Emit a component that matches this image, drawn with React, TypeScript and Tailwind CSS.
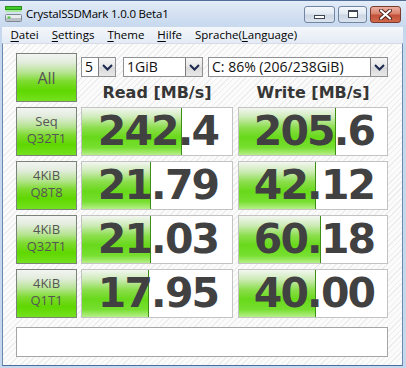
import React from "react";

const rows = [
  { a: "Seq", b: "Q32T1", read: "242.4", readFill: 100, write: "205.6", writeFill: 97 },
  { a: "4KiB", b: "Q8T8", read: "21.79", readFill: 69, write: "42.12", writeFill: 77 },
  { a: "4KiB", b: "Q32T1", read: "21.03", readFill: 69, write: "60.18", writeFill: 82 },
  { a: "4KiB", b: "Q1T1", read: "17.95", readFill: 67, write: "40.00", writeFill: 77 },
];

const greenBtn =
  "border border-[#7a8378] bg-[linear-gradient(to_bottom,#f3f4f3_0%,#e2ecdc_18%,#b4e48e_40%,#7ddb2e_58%,#5fd700_78%,#74e11f_100%)]";

function Chevron() {
  return (
    <svg width="11" height="7" viewBox="0 0 11 7">
      <path d="M1 1 L5.5 5.5 L10 1" fill="none" stroke="#1b2850" strokeWidth="2" />
    </svg>
  );
}

function Combo({ w, text }: { w: string; text: string }) {
  return (
    <div className={`flex h-[20px] border border-[#8f9194] bg-white ${w}`}>
      <div className="flex-1 pl-[3px] text-[14px] leading-[18px] text-[#111]">{text}</div>
      <div className="flex w-[17px] items-center justify-center border-l border-[#7d7d7d] bg-[linear-gradient(to_bottom,#f6f6f6,#e6e6e6_50%,#d8d8d8_51%,#e8e8e8)]">
        <Chevron />
      </div>
    </div>
  );
}

function Meter({ value, fill, w }: { value: string; fill: number; w: string }) {
  return (
    <div className={`relative h-[49px] border border-[#c3c3c3] bg-white ${w}`}>
      {/* bar behind the number */}
      <div
        className="absolute bottom-0 left-0 top-0 border-r border-[#3c8f14] bg-[linear-gradient(to_bottom,#f3f6f1_0%,#cdebb6_20%,#8bde4c_42%,#68d91a_62%,#77df30_84%,#b6ef88_100%)]"
        style={{ width: fill }}
      />
      <div className="relative flex h-full items-center justify-center pl-[2px] font-['DejaVu_Sans',sans-serif] text-[41px] font-bold leading-none tracking-[-1.8px] text-[#414141]">
        {value}
      </div>
    </div>
  );
}

function MenuItem({ first, rest }: { first: string; rest: string }) {
  return (
    <span className="px-[6.5px]">
      <span className="underline underline-offset-[2px]">{first}</span>
      {rest}
    </span>
  );
}

export default function App() {
  return (
    <div className="flex h-[368px] w-[406px] flex-col overflow-hidden bg-[#c6d8ee] font-['Open_Sans',sans-serif]">
      {/* Title bar */}
      <div className="flex h-[27px] items-center border-t border-[#4f6f9a] bg-[linear-gradient(to_bottom,#e4edf8,#d3e1f2_50%,#c8d9ee)] pl-[5px] pr-[5px]">
        <svg width="17" height="16" viewBox="0 0 17 16" className="shrink-0">
          <rect x="0.5" y="0.5" width="16" height="3" fill="#3fcf2a" stroke="#2a8f1c" />
          <rect x="0.5" y="4" width="16" height="2" fill="#a8e89a" />
          <rect x="0.5" y="8.5" width="16" height="7" rx="1" fill="#e9ecef" stroke="#7f8790" />
          <rect x="1" y="12" width="15" height="3" fill="#b9bfc6" />
          <rect x="2.5" y="10.5" width="3" height="2" fill="#4cc63a" />
        </svg>
        <div className="ml-[4px] text-[11.5px] tracking-[-0.2px] text-black">CrystalSSDMark 1.0.0 Beta1</div>
        <div className="ml-auto flex h-[17px] items-stretch">
          <div className="flex w-[31px] items-center justify-center rounded-[3px] border border-[#7086a3] bg-[linear-gradient(to_bottom,#f4f7fb,#e1e8f1_48%,#ccd6e3_52%,#dae3ee)]">
            <div className="mt-[5px] h-[4px] w-[11px] border border-[#3d4652] bg-white" />
          </div>
          <div className="ml-[3px] flex w-[29px] items-center justify-center rounded-[3px] border border-[#7086a3] bg-[linear-gradient(to_bottom,#f4f7fb,#e1e8f1_48%,#ccd6e3_52%,#dae3ee)]">
            <div className="h-[8px] w-[10px] border border-t-2 border-[#3d4652] bg-white" />
          </div>
          <div className="ml-[3px] flex w-[31px] items-center justify-center rounded-[3px] border border-[#7a3a2e] bg-[linear-gradient(to_bottom,#eab0a2,#d9826c_45%,#c4503a_55%,#d06a4c)]">
            <svg width="13" height="11" viewBox="0 0 13 11">
              <path d="M2 1.5 L11 9.5 M11 1.5 L2 9.5" stroke="#4a2018" strokeWidth="4" strokeLinecap="round" />
              <path d="M2 1.5 L11 9.5 M11 1.5 L2 9.5" stroke="#ffffff" strokeWidth="2.2" strokeLinecap="round" />
            </svg>
          </div>
        </div>
      </div>

      {/* Frame body */}
      <div className="flex flex-1 flex-col pb-[2px] pl-[2px] pr-[3px]">
        {/* Menu bar */}
        <div className="flex h-[16px] items-center bg-[linear-gradient(to_bottom,#f4f7fb,#e4ebf5)] pl-[2px] text-[11.5px] leading-none text-black">
          <MenuItem first="D" rest="atei" />
          <MenuItem first="S" rest="ettings" />
          <MenuItem first="T" rest="heme" />
          <MenuItem first="H" rest="ilfe" />
          <span className="px-[6.5px]">
            Sprache(<span className="underline underline-offset-[2px]">L</span>anguage)
          </span>
        </div>

        {/* Client area */}
        <div className="flex flex-1 flex-col border-x border-b border-t border-x-[#6a88b0] border-b-[#4b6e9c] border-t-[#d3dce8] bg-[repeating-linear-gradient(135deg,#fbfbfb_0px,#fbfbfb_3px,#ededed_3px,#ededed_4px)] pl-[13px] pt-[9px]">
          {/* Top row */}
          <div className="flex h-[49px]">
            <div className={`flex h-[49px] w-[61px] items-center justify-center text-[16px] leading-none text-[#555] ${greenBtn}`}>
              All
            </div>
            <div className="ml-[4px] flex flex-col">
              <div className="mt-[4px] flex">
                <Combo w="w-[35px]" text="5" />
                <Combo w="ml-[7px] w-[80px]" text="1GiB" />
                <Combo w="ml-[5px] w-[180px]" text="C: 86% (206/238GiB)" />
              </div>
              <div className="flex pt-[8px] font-['DejaVu_Sans',sans-serif] text-[16px] font-bold leading-none text-[#363636]">
                <div className="w-[152px] text-center">Read [MB/s]</div>
                <div className="ml-[5px] w-[150px] text-center">Write [MB/s]</div>
              </div>
            </div>
          </div>

          {/* Result rows */}
          {rows.map((r, i) => (
            <div key={i} className="mt-[5px] flex">
              <div className={`flex h-[49px] w-[61px] flex-col items-center justify-center pb-[3px] text-[13px] leading-[17px] text-[#555] ${greenBtn}`}>
                <span>{r.a}</span>
                <span>{r.b}</span>
              </div>
              <Meter w="ml-[4px] w-[152px]" value={r.read} fill={r.readFill} />
              <Meter w="ml-[5px] w-[150px]" value={r.write} fill={r.writeFill} />
            </div>
          ))}

          {/* Comment / status box */}
          <div className="mt-[9px] h-[30px] w-[372px] border border-[#a5a5a5] bg-white" />
        </div>
      </div>
    </div>
  );
}
